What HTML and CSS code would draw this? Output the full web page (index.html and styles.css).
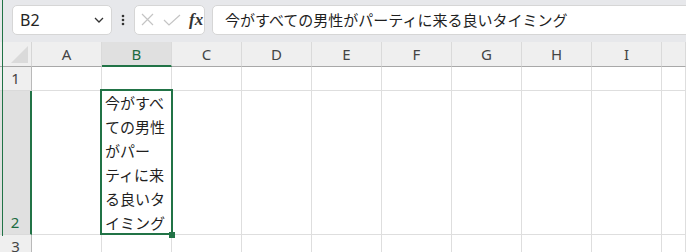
FILE: index.html
```html
<!DOCTYPE html>
<html lang="ja">

<head>
    <meta charset="UTF-8">
    <meta name="viewport" content="width=device-width, initial-scale=1.0">
    <title>Sheet</title>
    <link rel="stylesheet" href="styles.css">
</head>

<body>
    <div class="window-edge"></div>

    <div class="toolbar">
        <div class="namebox">
            <span>B2</span>
            <svg class="chevron" width="10" height="6" viewBox="0 0 10 6">
                <path d="M1 1 L5 5 L9 1" fill="none" stroke="#333" stroke-width="1.3" />
            </svg>
        </div>
        <div class="dots">
            <svg width="4" height="12" viewBox="0 0 4 12">
                <circle cx="2" cy="2" r="1.3" fill="#333" />
                <circle cx="2" cy="6" r="1.3" fill="#333" />
                <circle cx="2" cy="10" r="1.3" fill="#333" />
            </svg>
        </div>
        <div class="fx-group">
            <svg width="13" height="13" viewBox="0 0 13 13">
                <path d="M1 1 L12 12 M12 1 L1 12" stroke="#c4c4c4" stroke-width="1.2" />
            </svg>
            <svg width="18" height="12" viewBox="0 0 18 12">
                <path d="M1 6 L6 11 L17 1" fill="none" stroke="#c4c4c4" stroke-width="1.2" />
            </svg>
            <span class="fx">fx</span>
        </div>
        <div class="formula">今がすべての男性がパーティに来る良いタイミング</div>
    </div>

    <div class="sheet">
        <!-- header row -->
        <div class="corner"><span class="tri"></span></div>
        <div class="col-head">A</div>
        <div class="col-head active">B</div>
        <div class="col-head">C</div>
        <div class="col-head">D</div>
        <div class="col-head">E</div>
        <div class="col-head">F</div>
        <div class="col-head">G</div>
        <div class="col-head">H</div>
        <div class="col-head">I</div>
        <div class="col-head"></div>

        <!-- row 1 -->
        <div class="row-head">1</div>
        <div class="cell"></div>
        <div class="cell"></div>
        <div class="cell"></div>
        <div class="cell"></div>
        <div class="cell"></div>
        <div class="cell"></div>
        <div class="cell"></div>
        <div class="cell"></div>
        <div class="cell"></div>
        <div class="cell"></div>

        <!-- row 2 -->
        <div class="row-head active">2</div>
        <div class="cell"></div>
        <div class="cell selected">
            <div class="wrap">今がすべての男性がパーティに来る良いタイミング</div>
            <span class="handle"></span>
        </div>
        <div class="cell"></div>
        <div class="cell"></div>
        <div class="cell"></div>
        <div class="cell"></div>
        <div class="cell"></div>
        <div class="cell"></div>
        <div class="cell"></div>
        <div class="cell"></div>

        <!-- row 3 -->
        <div class="row-head">3</div>
        <div class="cell"></div>
        <div class="cell"></div>
        <div class="cell"></div>
        <div class="cell"></div>
        <div class="cell"></div>
        <div class="cell"></div>
        <div class="cell"></div>
        <div class="cell"></div>
        <div class="cell"></div>
        <div class="cell"></div>
    </div>
</body>

</html>
```

FILE: styles.css
```css
body {
    margin: 0;
    padding: 0;
    background-color: #ffffff;
    font-family: "Noto Sans", "Noto Sans CJK JP", sans-serif;
    overflow: hidden;
}

.window-edge {
    position: absolute;
    left: 2px;
    top: 0;
    width: 1px;
    height: 236px;
    background-color: #217346;
    z-index: 5;
}

.toolbar {
    display: flex;
    align-items: center;
    height: 42px;
    box-sizing: border-box;
    padding: 5px 0 8px 12px;
    background-color: #e7e8eb;
    overflow: hidden;
}

.namebox,
.fx-group,
.formula {
    height: 30px;
    box-sizing: border-box;
    background-color: #ffffff;
    border: 1px solid #d6d6d6;
    border-radius: 5px;
}

.namebox {
    width: 100px;
    display: flex;
    align-items: center;
    justify-content: space-between;
    padding: 0 7px 0 7px;
    font-size: 16px;
    color: #242424;
}

.dots {
    width: 22px;
    display: flex;
    justify-content: center;
}

.fx-group {
    width: 71px;
    display: flex;
    align-items: center;
    gap: 9px;
    padding-left: 6px;
}

.fx {
    font-family: "Liberation Serif", serif;
    font-style: italic;
    font-weight: bold;
    font-size: 17px;
    color: #333;
    margin-left: -1px;
}

.formula {
    flex: 1;
    margin-left: 7px;
    margin-right: -10px;
    padding-left: 12px;
    line-height: 28px;
    font-family: "Noto Sans CJK JP", sans-serif;
    font-size: 15px;
    color: #1f1f1f;
    white-space: nowrap;
}

.sheet {
    display: grid;
    grid-template-columns: 32px repeat(9, 70px) 1fr;
    grid-template-rows: 25px 24px 144px 24px;
    font-size: 15px;
    color: #444;
}

.sheet > div {
    box-sizing: border-box;
}

.corner {
    background-color: #efefef;
    border-right: 1px solid #d6d6d6;
    border-bottom: 1px solid #a8a8a8;
    position: relative;
}

.tri {
    position: absolute;
    left: 11px;
    top: 4px;
    width: 0;
    height: 0;
    border-left: 17px solid transparent;
    border-bottom: 17px solid #dadada;
}

.col-head {
    background-color: #efefef;
    border-right: 1px solid #dadada;
    border-bottom: 1px solid #a8a8a8;
    text-align: center;
    line-height: 24px;
}

.col-head.active {
    background-color: #e0e0e0;
    border-bottom: 2px solid #217346;
    color: #1c6b40;
}

.row-head {
    background-color: #efefef;
    border-right: 1px solid #b9b9b9;
    border-bottom: 1px solid #dadada;
    display: flex;
    align-items: flex-end;
    justify-content: center;
    padding-bottom: 0;
    line-height: 23px;
}

.row-head.active {
    background-color: #e0e0e0;
    border-right: 2px solid #217346;
    color: #1c6b40;
}

.cell {
    border-right: 1px solid #dedede;
    border-bottom: 1px solid #dedede;
}

.selected {
    position: relative;
}

.selected::after {
    content: "";
    position: absolute;
    left: -2px;
    top: -2px;
    width: 73px;
    height: 146px;
    border: 2px solid #217346;
    box-sizing: border-box;
}

.wrap {
    padding-left: 3px;
    width: 66px;
    box-sizing: border-box;
    font-family: "Noto Sans CJK JP", sans-serif;
    font-size: 15px;
    line-height: 24px;
    color: #1f1f1f;
    line-break: strict;
    word-break: normal;
}

.handle {
    position: absolute;
    left: 67px;
    top: 141px;
    width: 6px;
    height: 6px;
    background-color: #217346;
    z-index: 2;
}
```
